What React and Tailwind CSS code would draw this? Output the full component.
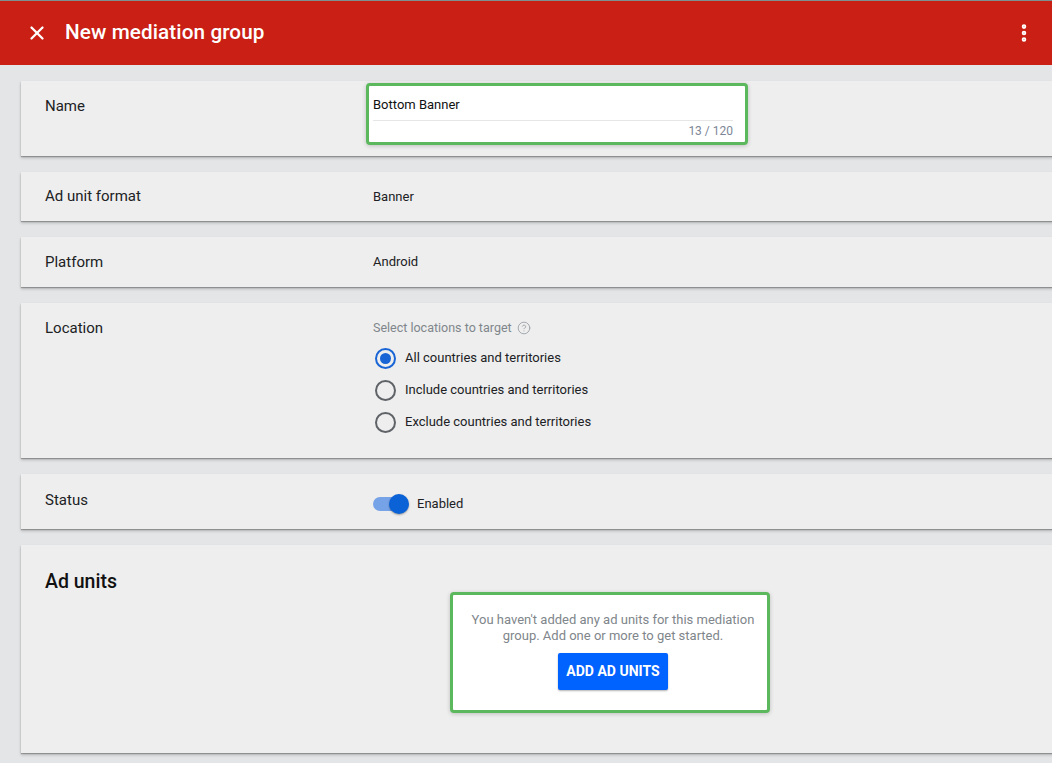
import React, { useState } from 'react';
import { X, EllipsisVertical, CircleHelp } from 'lucide-react';

const Card = ({ className = '', children }) => (
    <div className={`bg-[#eeeeee] shadow-[0_1px_1px_rgba(0,0,0,0.25),0_2px_3px_rgba(0,0,0,0.2)] ${className}`}>
        {children}
    </div>
);

const Radio = ({ checked, label, onClick }) => (
    <div className="flex items-center h-[32px] cursor-pointer" onClick={onClick}>
        <div className="w-[21px] h-[21px] ml-[2px] rounded-full flex items-center justify-center border-2 border-solid"
            style={{ borderColor: checked ? '#1a65d6' : '#5f6368' }}>
            {checked && <div className="w-[11px] h-[11px] rounded-full bg-[#1a65d6]" />}
        </div>
        <span className="ml-[9px] text-[13px] text-[#202124]">{label}</span>
    </div>
);

export default function App() {
    const [loc, setLoc] = useState('all');
    const [enabled, setEnabled] = useState(true);

    return (
        <div className="w-[1052px] h-[763px] overflow-hidden bg-[#e4e5e6] font-['Roboto',sans-serif]">
            {/* Top bar */}
            <div className="h-[65px] border-t border-[#7d8f8f] bg-[#c91f14] flex items-center text-white">
                <X className="w-[22px] h-[22px] ml-[26px]" strokeWidth={2.5} />
                <h1 className="ml-[17px] text-[20.7px] font-medium tracking-[0.1px]">New mediation group</h1>
                <EllipsisVertical className="w-[22px] h-[22px] ml-auto mr-[17px]" strokeWidth={3} />
            </div>

            <div className="pl-[21px] pt-[16px] flex flex-col gap-[16px] -mr-[20px]">
                {/* Name */}
                <Card className="h-[75px] flex">
                    <div className="w-[345px] pl-[24px] pt-[14px] text-[15px] text-[#202124]">Name</div>
                    <div className="mt-[2px] w-[382px] h-[62px] rounded-[4px] border-[3px] border-[#5cb85c] bg-white shadow-[0_1px_4px_rgba(0,0,0,0.2)] px-[4px]">
                        <div className="text-[13px] text-[#111] pt-[10px] leading-[18px]">Bottom Banner</div>
                        <div className="mt-[6px] mr-[8px] border-t border-[#e6e6e6]" />
                        <div className="mr-[8px] text-right text-[12px] text-[#7d8696] leading-[16px] pt-[2px]">13 / 120</div>
                    </div>
                </Card>

                {/* Ad unit format */}
                <Card className="h-[49px] flex items-center">
                    <div className="w-[352px] pl-[24px] text-[15px] text-[#202124]">Ad unit format</div>
                    <div className="text-[13px] text-[#202124]">Banner</div>
                </Card>

                {/* Platform */}
                <Card className="h-[50px] flex items-center">
                    <div className="w-[352px] pl-[24px] text-[15px] text-[#202124]">Platform</div>
                    <div className="text-[13px] text-[#202124]">Android</div>
                </Card>

                {/* Location */}
                <Card className="h-[155px] flex">
                    <div className="w-[352px] pl-[24px] pt-[14px] text-[15px] text-[#202124]">Location</div>
                    <div className="pt-[16px]">
                        <div className="flex items-center text-[12.5px] text-[#80868b] leading-[18px]">
                            Select locations to target
                            <CircleHelp className="w-[14px] h-[14px] ml-[5px] text-[#9aa0a6]" strokeWidth={1.5} />
                        </div>
                        <div className="mt-[5px] flex flex-col">
                            <Radio checked={loc === 'all'} label="All countries and territories" onClick={() => setLoc('all')} />
                            <Radio checked={loc === 'include'} label="Include countries and territories" onClick={() => setLoc('include')} />
                            <Radio checked={loc === 'exclude'} label="Exclude countries and territories" onClick={() => setLoc('exclude')} />
                        </div>
                    </div>
                </Card>

                {/* Status */}
                <Card className="h-[55px] flex">
                    <div className="w-[352px] pl-[24px] pt-[15px] text-[15px] text-[#202124]">Status</div>
                    <div className="pt-[19px] flex items-center h-[41px] cursor-pointer" onClick={() => setEnabled(!enabled)}>
                        <div className="relative w-[36px] h-[22px] flex items-center">
                            <div className="w-[32px] h-[14px] rounded-full bg-[#76a3e8]" />
                            <div className="absolute left-[16px] top-[1px] w-[20px] h-[20px] rounded-full bg-[#0b62d6] shadow-[0_1px_2px_rgba(0,0,0,0.35)]" />
                        </div>
                        <span className="ml-[8px] text-[13px] text-[#202124]">Enabled</span>
                    </div>
                </Card>

                {/* Ad units */}
                <Card className="h-[208px] flex">
                    <div className="w-[429px] pl-[24px] pt-[22px] text-[19.5px] font-medium text-[#111]">Ad units</div>
                    <div className="mt-[47px] w-[320px] h-[121px] rounded-[4px] border-[3px] border-[#5cb85c] bg-white shadow-[0_1px_4px_rgba(0,0,0,0.2)] flex flex-col items-center">
                        <p className="mt-[17px] text-center text-[13px] leading-[16px] text-[#80868b] pl-[16px] pr-[10px]">
                            You haven't added any ad units for this mediation group. Add one or more to get started.
                        </p>
                        <button className="mt-[9px] ml-[6px] w-[110px] h-[37px] rounded-[2px] bg-[#0062ff] text-white text-[14px] font-bold shadow-[0_1px_2px_rgba(0,0,0,0.3)]">
                            ADD AD UNITS
                        </button>
                    </div>
                </Card>
            </div>
        </div>
    );
}
